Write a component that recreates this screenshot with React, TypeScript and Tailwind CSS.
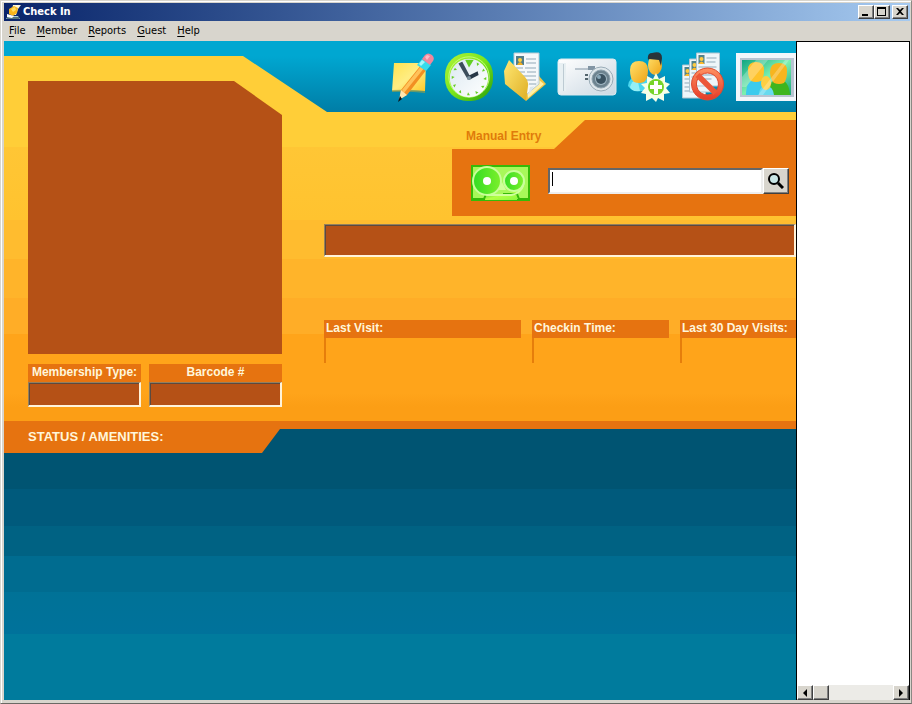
import React from "react";

type IconProps = { className?: string };

const raised =
  "bg-[#d8d5cd] border border-t-white border-l-white border-r-[#404040] border-b-[#404040] shadow-[inset_-1px_-1px_0_#808080]";

function AppIcon() {
  return (
    <svg viewBox="0 0 16 16" className="h-4 w-4 shrink-0" aria-hidden="true">
      <path d="M7 1h8l-3 4-2 6H5z" fill="#fff7d8" />
      <path d="M2 12h10l2 3H0z" fill="#a8cdd8" />
      <path d="M1 13h12v2H1z" fill="#52737d" />
      <path d="M3 5l5-3 4 2-1 5-4 3-4-2z" fill="#f7b51b" />
      <path d="M5 5l4-2 1 3-3 2z" fill="#ffdd63" />
      <path d="M1 10l7 2-2 2-5-1z" fill="#fff" />
    </svg>
  );
}

function NoteIcon({ className }: IconProps) {
  return (
    <svg viewBox="0 0 44 50" className={className} aria-hidden="true">
      <defs>
        <linearGradient id="note" x1="0" y1="0" x2="1" y2="1">
          <stop offset="0" stopColor="#ffe24f" />
          <stop offset=".5" stopColor="#ffed83" />
          <stop offset="1" stopColor="#ffc928" />
        </linearGradient>
      </defs>
      <path d="M4 11h32l-1 28q-15-1-33 0z" fill="url(#note)" />
      <path d="M2 38q16-1 33 1v2q-17-2-33-1z" fill="#8f9c4f" opacity=".7" />
      <path d="M11 38l20-25 6 4-20 26-7 3z" fill="#f28f22" />
      <path d="M12 38l20-25 3 2-21 26z" fill="#ffc25a" />
      <path d="M11 38l6 5-8 5z" fill="#ffe5af" />
      <path d="M10 44l2 3-4 3z" fill="#111" />
      <path d="M27 13l5-6 9 6-5 6z" fill="#35dcec" />
      <path d="M29 12l3-4 3 2-4 4z" fill="#a5f7fa" />
      <path d="M32 7l3-4q3-3 7 0 3 3 1 6l-3 4z" fill="#f0879c" />
      <path d="M35 5l2-2 3 1-3 4z" fill="#ffb9c4" />
    </svg>
  );
}

function ClockIcon({ className }: IconProps) {
  const ticks = [30, 60, 90, 120, 150, 180, 210, 240, 270, 300, 330];
  return (
    <svg viewBox="0 0 50 50" className={className} aria-hidden="true">
      <defs>
        <linearGradient id="clockRim" x1="0" y1="0" x2="1" y2="1">
          <stop offset="0" stopColor="#b4f53a" />
          <stop offset=".5" stopColor="#78e51c" />
          <stop offset="1" stopColor="#259b0b" />
        </linearGradient>
        <linearGradient id="clockFace" x1="0" y1="0" x2="1" y2="1">
          <stop offset="0" stopColor="#dce9f1" />
          <stop offset="1" stopColor="#fff" />
        </linearGradient>
      </defs>
      <rect x="0" y="0" width="50" height="50" rx="23" fill="url(#clockRim)" />
      <circle cx="25" cy="25" r="21" fill="none" stroke="#c9ff7b" />
      <circle cx="25" cy="26" r="20" fill="url(#clockFace)" />
      <path d="M21 7h9l-5 8z" fill="#63cf22" />
      {ticks.map((angle) => (
        <path key={angle} d="M24 8h3l-1 3z" fill="#69cd27" transform={`rotate(${angle} 25 26)`} />
      ))}
      <path d="M14 11l4-2 9 17-3 2z" fill="#3b4d5b" />
      <path d="M24 24l10-5 1 4-10 5z" fill="#263746" />
      <circle cx="25" cy="26" r="2" fill="#7f95a0" />
    </svg>
  );
}

function FolderIcon({ className }: IconProps) {
  return (
    <svg viewBox="0 0 42 50" className={className} aria-hidden="true">
      <defs>
        <linearGradient id="folder" x1="0" y1="0" x2="1" y2="1">
          <stop offset="0" stopColor="#ffe873" />
          <stop offset="1" stopColor="#dfae24" />
        </linearGradient>
      </defs>
      <path d="M35 24l7 8-20 17V38z" fill="#f0c443" />
      <path d="M24 46l16-14-5-4-12 8z" fill="#fff0a6" />
      <path d="M10 1h25v31L23 42 10 30z" fill="#f5f8fa" stroke="#b7c7d0" />
      <path d="M35 27q-1 8-9 8l-2 9z" fill="#dbe6ec" />
      <rect x="12" y="4" width="8" height="9" fill="#527d89" />
      <path d="M13 13q3-6 6 0z" fill="#efac22" />
      <circle cx="16" cy="8" r="2" fill="#ffcf3e" />
      <path d="M22 7h10M22 11h10M12 16h7M21 16h11M14 20h7M23 20h9M19 24h13M22 28h10M25 32h7" stroke="#91a8b7" />
      <path d="M0 19L5 8l16 17q4 4 3 9l-2 15L1 32z" fill="url(#folder)" />
    </svg>
  );
}

function CameraIcon({ className }: IconProps) {
  return (
    <svg viewBox="0 0 60 38" className={className} aria-hidden="true">
      <defs>
        <linearGradient id="camera" x1="0" y1="0" x2="1" y2="1">
          <stop offset="0" stopColor="#fff" />
          <stop offset="1" stopColor="#cbd8e2" />
        </linearGradient>
      </defs>
      <rect x="1" y="1" width="58" height="36" rx="3" fill="url(#camera)" stroke="#dce9ee" />
      <path d="M2 5h7v28H2z" fill="#e8f0f3" />
      <path d="M6 6h1v27H6z" fill="#bdcbd3" />
      <path d="M18 11h13" stroke="#8295a4" />
      <path d="M31 8h7v4h-7z" fill="#8295a4" />
      <path d="M28 16h3v2h-3zM28 20h3v2h-3z" fill="#52636b" />
      <circle cx="44" cy="21" r="12" fill="#dfe7eb" stroke="#9aacb7" />
      <circle cx="44" cy="21" r="9" fill="#6d838f" stroke="#8fa3af" />
      <circle cx="44" cy="21" r="6" fill="#a2b8c4" />
      <circle cx="44" cy="21" r="5" fill="#3b5260" />
      <circle cx="42" cy="19" r="2" fill="#8aa9b9" />
    </svg>
  );
}

function MembersIcon({ className }: IconProps) {
  return (
    <svg viewBox="0 0 42 50" className={className} aria-hidden="true">
      <defs>
        <linearGradient id="skin" x1="0" y1="0" x2="1" y2="1">
          <stop offset="0" stopColor="#ffe16b" />
          <stop offset="1" stopColor="#f0a316" />
        </linearGradient>
      </defs>
      <path d="M20 20q15-4 15 9l-8 6-7-6z" fill="#178bb7" />
      <ellipse cx="27" cy="13" rx="7" ry="10" fill="url(#skin)" />
      <path d="M20 8q-1-7 4-7 10-3 10 5l-1 8-2-6-10-1z" fill="#293339" />
      <path d="M0 34q1-10 11-10t13 10l-4 4q-14 4-20-4z" fill="#4ad7ef" />
      <path d="M2 35q3-9 8-5l2 9q-9 1-10-4z" fill="#93eff6" />
      <path d="M2 18q0-9 9-9t9 9q0 9-4 12-5 2-10 0-4-3-4-12z" fill="url(#skin)" />
      <path d="M28 21l3 6 6-3v6l5 2-4 4 4 5-6 1v7l-6-3-2 4-4-4-6 3v-7l-5-1 4-5-4-4 6-1v-7l6 3z" fill="#f7ffe8" />
      <circle cx="28" cy="35" r="8" fill="#76d329" />
      <path d="M26 29h4v4h4v4h-4v5h-4v-5h-4v-4h4z" fill="#fff" />
    </svg>
  );
}

function Sheet({ x, y }: { x: number; y: number }) {
  return (
    <g transform={`translate(${x} ${y})`}>
      <path d="M0 0h23v33H0z" fill="#eef6fa" stroke="#afc4cf" />
      <path d="M2 2h6v9H2z" fill="#51838b" />
      <path d="M2 11q3-5 6 0z" fill="#ffbb28" />
      <circle cx="5" cy="6" r="2" fill="#ffcc43" />
      <path d="M10 5h10M10 9h9M2 14h18M2 18h15M2 22h18M2 26h13" stroke="#8fa9b8" />
    </g>
  );
}

function BlockedIcon({ className }: IconProps) {
  return (
    <svg viewBox="0 0 43 50" className={className} aria-hidden="true">
      <defs>
        <linearGradient id="ban" x1="0" y1="0" x2="0" y2="1">
          <stop offset="0" stopColor="#ff9160" />
          <stop offset="1" stopColor="#e53a28" />
        </linearGradient>
      </defs>
      <Sheet x={1} y={13} />
      <Sheet x={8} y={7} />
      <Sheet x={15} y={1} />
      <path d="M26 16a16 16 0 1 0 .1 0zm0 5a11 11 0 1 1-.1 0z" fill="url(#ban)" stroke="#df4a2e" />
      <path d="M18 21l18 18-4 4-18-18z" fill="#ec5739" />
    </svg>
  );
}

function PhotoIcon({ className }: IconProps) {
  return (
    <svg viewBox="0 0 60 48" className={className} aria-hidden="true">
      <defs>
        <linearGradient id="photo" x1="0" y1="0" x2="1" y2="1">
          <stop offset="0" stopColor="#10a582" />
          <stop offset=".5" stopColor="#7df0b0" />
          <stop offset="1" stopColor="#16a67d" />
        </linearGradient>
      </defs>
      <path d="M0 0h60v48H0z" fill="#f3f6fb" />
      <path d="M4 5h54v39H4z" fill="#b8c4d2" />
      <path d="M6 7h49v35H6z" fill="url(#photo)" />
      <path d="M10 42q0-16 10-15 10-1 12 15z" fill="#3ccbed" />
      <path d="M33 42q-1-17 9-15 11-1 12 15z" fill="#3eb51e" />
      <path d="M12 17q0-8 8-8t8 8q0 8-3 11-5 2-10 0-3-3-3-11z" fill="#ffc22b" />
      <path d="M34 19q0-9 9-9t8 9q0 7-3 11-5 2-10 0-4-4-4-11z" fill="#f7b51e" />
      <path d="M23 42q0-9 7-9t8 9z" fill="#67daef" />
      <ellipse cx="30" cy="30" rx="5" ry="7" fill="#ffcf43" />
      <path d="M20 7h12L10 34H6V24zM49 7h4L27 42h-5z" fill="#fff" opacity=".25" />
    </svg>
  );
}

function TapeIcon() {
  return (
    <svg viewBox="0 -4 60 42" className="h-[42px] w-[60px] shrink-0" aria-hidden="true">
      <defs>
        <linearGradient id="tape" x1="0" y1="0" x2="1" y2="1">
          <stop offset="0" stopColor="#39d52b" />
          <stop offset=".5" stopColor="#b3ff44" />
          <stop offset="1" stopColor="#8cf83c" />
        </linearGradient>
        <linearGradient id="reel">
          <stop offset="0" stopColor="#33dc24" />
          <stop offset="1" stopColor="#7df02b" />
        </linearGradient>
      </defs>
      <path d="M2 2h57v34H2z" fill="#a8f85a" stroke="#36ba08" strokeWidth="2" />
      <path d="M15 36v-5q14 1 32-4v9z" fill="url(#tape)" />
      <path d="M2 35h12l2-5M59 35H49l-2-5H33" fill="none" stroke="#36ba08" strokeWidth="2" />
      <path d="M17 31h24q12-2 13-14" fill="none" stroke="#d0ff9a" strokeWidth="2" />
      <circle cx="17" cy="17" r="14" fill="url(#reel)" stroke="#c9ff9a" strokeWidth="2" />
      <circle cx="44" cy="17" r="10" fill="url(#reel)" stroke="#c9ff9a" strokeWidth="2" />
      <path d="M32 18l4 8h-8z" fill="#d0ff9a" />
      <circle cx="17" cy="17" r="4" fill="#fff" />
      <circle cx="44" cy="17" r="4" fill="#fff" />
    </svg>
  );
}

const menus = ["File", "Member", "Reports", "Guest", "Help"];

const tools = [
  { name: "Notes", Icon: NoteIcon, size: "h-[50px] w-11" },
  { name: "Time clock", Icon: ClockIcon, size: "h-12 w-12" },
  { name: "Documents", Icon: FolderIcon, size: "h-[50px] w-[42px]" },
  { name: "Camera", Icon: CameraIcon, size: "h-[38px] w-[60px]" },
  { name: "Add member", Icon: MembersIcon, size: "h-[50px] w-[42px]" },
  { name: "Blocked members", Icon: BlockedIcon, size: "h-[50px] w-11" },
  { name: "Photos", Icon: PhotoIcon, size: "h-12 w-[60px]" },
];

const sunken =
  "block w-full border border-r-2 border-b-2 border-t-[#94805f] border-l-[#94805f] border-r-[#fff3da] border-b-[#fff3da] bg-[#b55116] px-1 text-xs text-white shadow-[inset_1px_1px_0_#5a4a40] outline-none";

const stats = [
  { id: "last-visit", label: "Last Visit:", width: "w-[197px]" },
  { id: "checkin-time", label: "Checkin Time:", width: "w-[137px]" },
  { id: "day-visits", label: "Last 30 Day Visits:", width: "min-w-[116px] flex-1" },
];

function Stat({ id, label, width }: { id: string; label: string; width: string }) {
  return (
    <div className={width}>
      <label htmlFor={id} className="block h-[18px] bg-[#e67310] pl-0.5 text-xs leading-4 font-bold whitespace-nowrap text-[#fff6db]">
        {label}
      </label>
      <output id={id} className="block h-[25px] border-l-2 border-[#e67e0b]" />
    </div>
  );
}

function TitleBar() {
  return (
    <header className="flex h-[18px] shrink-0 items-center bg-linear-to-r from-[#0a246a] to-[#a6caf0] px-0.5">
      <AppIcon />
      <h1 className="ml-px flex-1 font-['DejaVu_Sans_Condensed','DejaVu_Sans',sans-serif] text-[11px] leading-4 font-bold text-white">
        Check In
      </h1>
      <button aria-label="Minimize" className={`flex h-3.5 w-4 items-center justify-center ${raised}`}>
        <svg viewBox="0 0 12 10" className="h-2.5 w-3"><path d="M2 7h6v2H2z" /></svg>
      </button>
      <button aria-label="Maximize" className={`flex h-3.5 w-4 items-center justify-center ${raised}`}>
        <svg viewBox="0 0 12 10" className="h-2.5 w-3"><path d="M1 0h9v9H1zM2 2v6h7V2z" fillRule="evenodd" /></svg>
      </button>
      <button aria-label="Close" className={`ml-0.5 flex h-3.5 w-4 items-center justify-center ${raised}`}>
        <svg viewBox="0 0 12 10" className="h-2.5 w-3"><path d="M2 1h2l2 2 2-2h2L7 4.5 10 8H8L6 6 4 8H2l3-3.5z" /></svg>
      </button>
    </header>
  );
}

function ManualEntry() {
  return (
    <form className="mt-2 ml-32 grid h-24" onSubmit={(event) => event.preventDefault()}>
      <div className="col-start-1 row-start-1 bg-[#e67310] [clip-path:polygon(0_29px,102px_29px,133px_0,100%_0,100%_100%,0_100%)]" />
      <div className="z-10 col-start-1 row-start-1 min-w-0">
        <label htmlFor="entry" className="block h-[29px] pl-3.5 text-xs leading-8 font-bold text-[#e07b0b]">
          Manual Entry
        </label>
        <div className="flex h-16 items-center pr-[7px] pl-[18px]">
          <TapeIcon />
          <div className="relative ml-[18px] min-w-0 flex-1">
            <input
              id="entry"
              className="block h-[26px] w-full border-2 border-t-[#666] border-l-[#666] border-r-[#eee] border-b-[#eee] bg-white px-1 text-sm caret-transparent outline-none"
            />
            <span className="absolute top-1 left-1 h-3.5 w-px bg-black" />
          </div>
          <button aria-label="Search" className={`flex h-[26px] w-[26px] items-center justify-center ${raised}`}>
            <svg viewBox="0 0 16 16" className="h-4 w-4">
              <circle cx="6" cy="6" r="5" fill="#c9e6e6" stroke="#000" strokeWidth="2" />
              <path d="M10 10l5 5" stroke="#000" strokeWidth="3" />
            </svg>
          </button>
        </div>
      </div>
    </form>
  );
}

function ScrollBar() {
  return (
    <div className="flex h-[15px] bg-[#ecebe7]">
      <button aria-label="Scroll left" className={`flex w-4 items-center justify-center ${raised}`}>
        <svg viewBox="0 0 8 8" className="h-2 w-2"><path d="M6 0v8L2 4z" /></svg>
      </button>
      <div className={`w-4 ${raised}`} />
      <div className="flex-1" />
      <button aria-label="Scroll right" className={`flex w-4 items-center justify-center ${raised}`}>
        <svg viewBox="0 0 8 8" className="h-2 w-2"><path d="M2 0v8l4-4z" /></svg>
      </button>
    </div>
  );
}

export default function App() {
  return (
    <div className="flex h-screen min-h-[480px] w-full flex-col overflow-hidden border border-t-[#d8d5cd] border-r-[#8b8984] border-b-[#6b6964] border-l-[#d8d5cd] bg-[#d8d5cd] pt-0.5 pr-px pb-[3px] pl-[3px] font-['Liberation_Sans',Arial,sans-serif] shadow-[inset_1px_1px_0_#fff]">
      <TitleBar />
      <nav className="flex h-5 shrink-0 items-center gap-[11px] pl-[5px] font-['DejaVu_Sans_Condensed','DejaVu_Sans',sans-serif] text-[11px] text-black">
        {menus.map((menu) => (
          <button key={menu} className="leading-4">
            <span className="underline underline-offset-2">{menu[0]}</span>
            {menu.slice(1)}
          </button>
        ))}
      </nav>
      <div className="flex min-h-0 flex-1">
        <main className="flex min-w-0 flex-1 flex-col overflow-hidden bg-[#005472]">
          <section className="grid h-[380px] shrink-0 grid-cols-[320px_minmax(0,1fr)] grid-rows-[71px_minmax(0,1fr)] bg-[linear-gradient(#ffce38_0_106px,#ffc635_106px,#ffc32f_179px,#ffbc2f_179px_218px,#ffb42a_218px_257px,#ffad27_257px_293px,#ffa41a_293px_352px,#fc9e15_366px)]">
            <div className="col-span-2 col-start-1 row-start-1 bg-[linear-gradient(#00a7d1_15px,#007da6)] [clip-path:polygon(0_0,100%_0,100%_100%,323px_100%,239px_15px,0_15px)]" />
            <div className="z-10 col-start-1 row-span-2 row-start-1 pt-10 pl-6">
              <div className="h-[273px] w-[254px] bg-[#b55116] [clip-path:polygon(0_0,206px_0,100%_34px,100%_100%,0_100%)]" />
              <div className="mt-2.5 flex w-[254px] gap-2 text-xs font-bold text-[#fff6db]">
                <div className="w-[113px]">
                  <label htmlFor="membership" className="block h-[18px] bg-[#e67310] text-center leading-4 whitespace-nowrap">
                    Membership Type:
                  </label>
                  <input id="membership" readOnly className={`h-[25px] ${sunken}`} />
                </div>
                <div className="w-[133px]">
                  <label htmlFor="barcode" className="block h-[18px] bg-[#e67310] text-center leading-4">
                    Barcode #
                  </label>
                  <input id="barcode" readOnly className={`h-[25px] ${sunken}`} />
                </div>
              </div>
            </div>
            <div className="z-10 col-start-2 row-start-1 flex items-center justify-end gap-[11px]">
              {tools.map(({ name, Icon, size }) => (
                <button key={name} aria-label={name} title={name} className="shrink-0">
                  <Icon className={size} />
                </button>
              ))}
            </div>
            <div className="col-start-2 row-start-2 min-w-0">
              <ManualEntry />
              <input aria-label="Member name" readOnly className={`mt-2 h-[33px] ${sunken}`} />
              <div className="mt-[63px] flex gap-[11px]">
                {stats.map((stat) => (
                  <Stat key={stat.id} {...stat} />
                ))}
              </div>
            </div>
          </section>
          <section className="min-h-0 flex-1 bg-[linear-gradient(#005472_0_68px,#005a7c_68px_105px,#006283_105px_135px,#006c90_135px_171px,#007297_171px,#00729b_213px,#007b9d_213px)]">
            <h2 className="h-8 bg-[#e67310] pl-6 text-[13px] leading-8 font-bold text-[#fff6db] [clip-path:polygon(0_0,100%_0,100%_8px,276px_8px,258px_100%,0_100%)]">
              STATUS / AMENITIES:
            </h2>
          </section>
        </main>
        <aside className="flex w-[114px] shrink-0 flex-col justify-end border-t border-r border-l border-black bg-white">
          <ScrollBar />
        </aside>
      </div>
    </div>
  );
}
